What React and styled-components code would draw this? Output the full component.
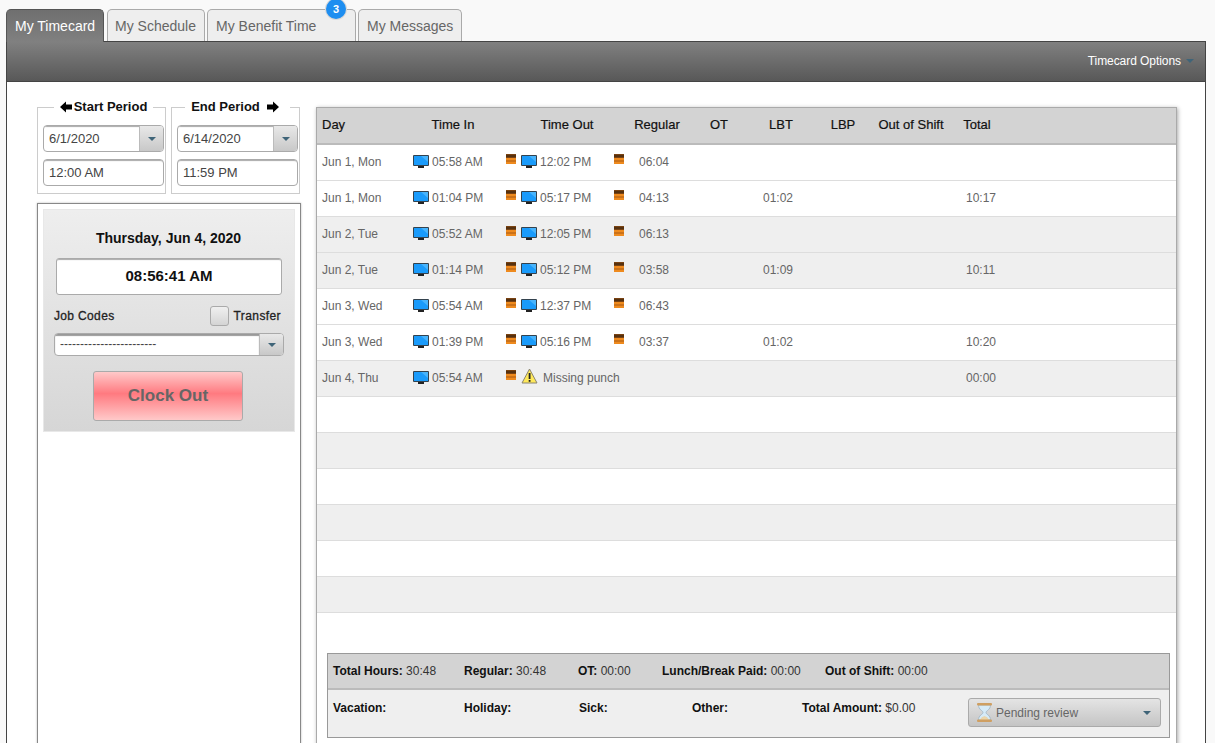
import React from 'react';
import styled, { createGlobalStyle } from 'styled-components';

const Global = createGlobalStyle`
  html, body {
    margin: 0;
    height: 743px;
    overflow: hidden;
    background: #f9f9f9;
    font-family: "Liberation Sans", Arial, sans-serif;
  }
`;

const Page = styled.div`
  padding: 9px 9px 0 6px;
`;

const Tabs = styled.div`
  display: flex;
  gap: 2px;
  height: 32px;
  position: relative;
  z-index: 1;
`;

const Tab = styled.div`
  position: relative;
  box-sizing: border-box;
  width: ${(p) => p.$width}px;
  margin-left: ${(p) => p.$gap || 0}px;
  height: ${(p) => (p.$active ? 33 : 32)}px;
  padding: 8px 0 0 ${(p) => p.$pad || 8}px;
  font-size: 14px;
  line-height: 16px;
  border: 1px solid ${(p) => (p.$active ? '#555' : '#aaa')};
  border-bottom: none;
  border-radius: 5px 5px 0 0;
  color: ${(p) => (p.$active ? '#fff' : '#666')};
  background: ${(p) => (p.$active ? 'linear-gradient(#6f6f6f, #808080)' : '#eee')};
`;

const Badge = styled.span`
  position: absolute;
  top: -11px;
  right: 9px;
  width: 20px;
  height: 20px;
  border-radius: 50%;
  background: #1e8ef0;
  box-shadow: 0 0 0 1px #d8d8d8;
  color: #fff;
  font-size: 11px;
  font-weight: bold;
  line-height: 20px;
  text-align: center;
`;

const Panel = styled.div`
  box-sizing: border-box;
  height: 720px;
  border: 1px solid #444;
  background: #fff;
`;

const Toolbar = styled.div`
  box-sizing: border-box;
  height: 40px;
  display: flex;
  align-items: center;
  justify-content: flex-end;
  gap: 5px;
  padding: 0 11px 2px 0;
  border-bottom: 1px solid #444;
  background: linear-gradient(#808080, #585858);
  color: #fff;
  font-size: 12px;
  letter-spacing: -0.06px;
`;

const Caret = styled.span`
  display: inline-block;
  width: 0;
  height: 0;
  border-left: 4px solid transparent;
  border-right: 4px solid transparent;
  border-top: 4px solid ${(p) => p.$color || '#3f6478'};
`;

const Content = styled.div`
  display: flex;
  gap: 15px;
  padding: 18px 0 0 30px;
`;

const LeftColumn = styled.div`
  width: 264px;
  display: flex;
  flex-direction: column;
  gap: 9px;
`;

const Periods = styled.div`
  display: flex;
  gap: 5px;
`;

const Period = styled.fieldset`
  box-sizing: border-box;
  width: 129px;
  height: 94px;
  margin: 0;
  padding: 11px 1px 0 5px;
  border: 1px solid #ccc;
  display: flex;
  flex-direction: column;
  gap: 7px;
`;

const Legend = styled.legend`
  display: flex;
  align-items: center;
  gap: 2px;
  margin: 0 auto;
  padding: 0 ${(p) => (p.$end ? 11 : 6)}px 0 6px;
  height: 14px;
  font-size: 13px;
  line-height: 14px;
  font-weight: bold;
  color: #111;
`;

const Arrow = styled.svg`
  width: 12px;
  height: 12px;
  margin: ${(p) => (p.$end ? '0 0 0 5px' : '0')};
  fill: #000;
`;

const Combo = styled.div`
  box-sizing: border-box;
  display: flex;
  height: 27px;
  width: ${(p) => p.$width || 121}px;
  border: 1px solid #aaa;
  border-radius: 4px;
  background: #fff;
  overflow: hidden;
`;

const ComboText = styled.div`
  flex: 1;
  padding-left: 5px;
  font-size: 13px;
  line-height: 25px;
  color: #444;
  box-shadow: inset 0 2px 1px -1px #aaa;
`;

const ComboButton = styled.div`
  width: 23px;
  display: flex;
  align-items: center;
  justify-content: center;
  border-left: 1px solid #bbb;
  background: linear-gradient(#e8e8e8, #c8c8c8);
`;

const TextBox = styled.div`
  box-sizing: border-box;
  width: 121px;
  height: 27px;
  padding-left: 5px;
  border: 1px solid #aaa;
  border-radius: 4px;
  box-shadow: inset 0 2px 1px -1px #aaa;
  font-size: 13px;
  line-height: 25px;
  color: #444;
`;

const ClockFrame = styled.div`
  box-sizing: border-box;
  height: 560px;
  padding: 5px;
  border: 1px solid #888;
  box-shadow: 0 0 2px #bbb;
`;

const Clock = styled.div`
  box-sizing: border-box;
  height: 223px;
  padding: 21px 11px 0 10px;
  border: 1px solid #e8e8e8;
  background: linear-gradient(#eeeeee, #d6d6d6);
  display: flex;
  flex-direction: column;
`;

const DateLine = styled.div`
  text-align: center;
  font-size: 14px;
  font-weight: bold;
  line-height: 14px;
  color: #111;
`;

const TimeBox = styled.div`
  box-sizing: border-box;
  margin: 13px 1px 0 2px;
  height: 37px;
  border: 1px solid #aaa;
  border-radius: 3px;
  background: #fff;
  box-shadow: inset 0 2px 1px -1px #aaa;
  text-align: center;
  font-size: 15px;
  font-weight: bold;
  line-height: 34px;
  color: #111;
`;

const JobRow = styled.div`
  display: flex;
  align-items: center;
  justify-content: space-between;
  margin-top: 11px;
  padding-right: 2px;
  height: 20px;
  font-size: 12px;
  color: #222;
  -webkit-text-stroke: 0.3px #222;
  letter-spacing: 0.35px;
`;

const Transfer = styled.label`
  display: flex;
  align-items: center;
  gap: 5px;
  letter-spacing: 0.4px;
`;

const Check = styled.span`
  box-sizing: border-box;
  width: 19px;
  height: 20px;
  border: 1px solid #aaa;
  border-radius: 3px;
  background: linear-gradient(#f0f0f0, #d4d4d4);
`;

const JobCombo = styled(Combo)`
  margin-top: 7px;
  height: 23px;
  width: 230px;
`;

const JobText = styled(ComboText)`
  line-height: 20px;
  box-shadow: inset 0 2px 1px 0 #999;
  font-size: 12px;
  letter-spacing: 0.02px;
`;

const ClockOut = styled.button`
  align-self: center;
  margin: 15px 2px 0 0;
  width: 150px;
  height: 50px;
  padding: 0 0 0 1px;
  border: 1px solid #aaa;
  border-radius: 3px;
  background: linear-gradient(#ffc9c9, #ff7a80 45%, #ffc9c9);
  color: #666;
  font-family: inherit;
  font-size: 17px;
  font-weight: bold;
`;

const Grid = styled.div`
  box-sizing: border-box;
  width: 861px;
  height: 700px;
  margin-top: 7px;
  border: 1px solid #aaa;
  box-shadow: 1px 1px 4px #aaa;
`;

const HeaderRow = styled.div`
  display: grid;
  grid-template-columns: 96px 80px 12px 124px 56px 68px 56px 68px 68px 64px;
  box-sizing: border-box;
  height: 37px;
  padding-bottom: 3px;
  align-items: center;
  background: #d3d3d3;
  border-bottom: 2px solid #bbb;
  font-size: 13px;
  color: #111;
  -webkit-text-stroke: 0.2px #111;
  text-align: center;
`;

const DayHead = styled.span`
  text-align: left;
  padding-left: 5px;
`;

const Row = styled.div`
  display: grid;
  grid-template-columns: 96px 93px 108px 149px 203px 1fr;
  box-sizing: border-box;
  height: 36px;
  padding-bottom: 2px;
  align-items: center;
  border-bottom: 1px solid #ddd;
  background: ${(p) => (p.$shaded ? '#efefef' : '#fff')};
  font-size: 12px;
  color: #666;
`;

const Cell = styled.div`
  display: flex;
  align-items: center;
  padding-left: ${(p) => p.$pad || 0}px;
  grid-column: span ${(p) => p.$span || 1};
  white-space: nowrap;
`;

const RegularValue = styled.span`
  margin-left: 10px;
`;

const Marker = styled.svg`
  width: 10px;
  height: 10px;
  margin: -6px 5px 0 0;
  flex: none;
`;

const Monitor = styled.svg`
  width: 16px;
  height: 13px;
  margin-right: 3px;
  flex: none;
`;

const Warn = styled.svg`
  width: 17px;
  height: 16px;
  margin: -4px 5px 0 0;
  flex: none;
`;

const Summary = styled.div`
  box-sizing: border-box;
  margin: 40px 6px 0 10px;
  border: 1px solid #999;
  height: 85px;
  font-size: 12px;
  color: #333;
`;

const SummaryTop = styled.div`
  display: flex;
  align-items: center;
  height: 36px;
  padding-left: 5px;
  background: #d3d3d3;
  border-bottom: 2px solid #bbb;
  box-sizing: border-box;
`;

const SummaryBottom = styled.div`
  display: flex;
  height: 47px;
  padding: 11px 0 0 5px;
  box-sizing: border-box;
  background: #efefef;
`;

const Stat = styled.div`
  width: ${(p) => p.$width}px;
  flex: none;
  white-space: nowrap;
`;

const Label = styled.b`
  color: #111;
`;

const Status = styled.div`
  box-sizing: border-box;
  width: 193px;
  height: 29px;
  margin-top: -3px;
  display: flex;
  align-items: center;
  padding: 0 9px 0 7px;
  border: 1px solid #aaa;
  border-radius: 3px;
  background: linear-gradient(#e4e4e4, #c4c4c4);
  color: #666;
`;

const StatusText = styled.span`
  flex: 1;
`;

const Glass = styled.svg`
  width: 17px;
  height: 21px;
  margin-right: 3px;
`;

const MonitorIcon = () => (
  <Monitor viewBox="0 0 16 13">
    <rect x="0" y="0" width="16" height="11" rx="1" fill="#33424e" />
    <rect x="1" y="1" width="14" height="9" fill="#1a9bfb" />
    <path d="M8 1h7v6z" fill="#48b4fc" />
    <rect x="5" y="11" width="6" height="2" fill="#222" />
  </Monitor>
);

const MarkerIcon = () => (
  <Marker viewBox="0 0 10 10">
    <rect width="10" height="10" fill="#ee8a1e" />
    <rect width="10" height="4" fill="#7a4312" />
    <rect y="1.500" width="10" height="1" fill="#33200c" />
    <rect y="6.500" width="10" height="1" fill="#a85a14" />
  </Marker>
);

const WarnIcon = () => (
  <Warn viewBox="0 0 17 16">
    <path d="M8.500 1 16 15H1z" fill="#ffe95a" stroke="#8a8470" strokeLinejoin="round" />
    <rect x="7.700" y="5" width="1.800" height="6" fill="#222" />
    <rect x="7.700" y="12" width="1.800" height="1.800" fill="#222" />
  </Warn>
);

const rows = [
  { day: 'Jun 1, Mon', timeIn: '05:58 AM', timeOut: '12:02 PM', regular: '06:04' },
  { day: 'Jun 1, Mon', timeIn: '01:04 PM', timeOut: '05:17 PM', regular: '04:13', lbt: '01:02', total: '10:17' },
  { day: 'Jun 2, Tue', timeIn: '05:52 AM', timeOut: '12:05 PM', regular: '06:13' },
  { day: 'Jun 2, Tue', timeIn: '01:14 PM', timeOut: '05:12 PM', regular: '03:58', lbt: '01:09', total: '10:11' },
  { day: 'Jun 3, Wed', timeIn: '05:54 AM', timeOut: '12:37 PM', regular: '06:43' },
  { day: 'Jun 3, Wed', timeIn: '01:39 PM', timeOut: '05:16 PM', regular: '03:37', lbt: '01:02', total: '10:20' },
  { day: 'Jun 4, Thu', timeIn: '05:54 AM', missing: true, total: '00:00' },
];

const shaded = [false, false, true, true, false, false, true, false, true, false, true, false, true];
const headers = ['Time In', '', 'Time Out', 'Regular', 'OT', 'LBT', 'LBP', 'Out of Shift', 'Total'];

const App = () => {
  return (
    <Page>
      <Global />
      <Tabs>
        <Tab $active $width={98}>My Timecard</Tab>
        <Tab $width={98} $gap={1} $pad={7}>My Schedule</Tab>
        <Tab $width={149}>My Benefit Time<Badge>3</Badge></Tab>
        <Tab $width={104}>My Messages</Tab>
      </Tabs>
      <Panel>
        <Toolbar>Timecard Options <Caret /></Toolbar>
        <Content>
          <LeftColumn>
            <Periods>
              <Period>
                <Legend>
                  <Arrow viewBox="0 0 12 12"><path d="M0 6 6 0.500V3.500H12V8.500H6V11.500z" /></Arrow>
                  Start Period
                </Legend>
                <Combo><ComboText>6/1/2020</ComboText><ComboButton><Caret /></ComboButton></Combo>
                <TextBox>12:00 AM</TextBox>
              </Period>
              <Period>
                <Legend $end>
                  End Period
                  <Arrow $end viewBox="0 0 12 12"><path d="M12 6 6 0.500V3.500H0V8.500H6V11.500z" /></Arrow>
                </Legend>
                <Combo><ComboText>6/14/2020</ComboText><ComboButton><Caret /></ComboButton></Combo>
                <TextBox>11:59 PM</TextBox>
              </Period>
            </Periods>
            <ClockFrame>
              <Clock>
                <DateLine>Thursday, Jun 4, 2020</DateLine>
                <TimeBox>08:56:41 AM</TimeBox>
                <JobRow>
                  <span>Job Codes</span>
                  <Transfer><Check />Transfer</Transfer>
                </JobRow>
                <JobCombo>
                  <JobText>------------------------</JobText>
                  <ComboButton><Caret /></ComboButton>
                </JobCombo>
                <ClockOut>Clock Out</ClockOut>
              </Clock>
            </ClockFrame>
          </LeftColumn>
          <Grid>
            <HeaderRow>
              <DayHead>Day</DayHead>
              {headers.map((h, i) => <span key={i}>{h}</span>)}
            </HeaderRow>
            {shaded.map((isShaded, i) => {
              const r = rows[i];
              return (
                <Row key={i} $shaded={isShaded}>
                  {r && (
                    <>
                      <Cell $pad={5}>{r.day}</Cell>
                      <Cell><MonitorIcon />{r.timeIn}</Cell>
                      {r.missing ? (
                        <Cell $span={2}><MarkerIcon /><WarnIcon />Missing punch</Cell>
                      ) : (
                        <>
                          <Cell><MarkerIcon /><MonitorIcon />{r.timeOut}</Cell>
                          <Cell><MarkerIcon /><RegularValue>{r.regular}</RegularValue></Cell>
                        </>
                      )}
                      <Cell>{r.lbt}</Cell>
                      <Cell>{r.total}</Cell>
                    </>
                  )}
                </Row>
              );
            })}
            <Summary>
              <SummaryTop>
                <Stat $width={131}><Label>Total Hours:</Label> 30:48</Stat>
                <Stat $width={114}><Label>Regular:</Label> 30:48</Stat>
                <Stat $width={84}><Label>OT:</Label> 00:00</Stat>
                <Stat $width={163}><Label>Lunch/Break Paid:</Label> 00:00</Stat>
                <Stat $width={120}><Label>Out of Shift:</Label> 00:00</Stat>
              </SummaryTop>
              <SummaryBottom>
                <Stat $width={131}><Label>Vacation:</Label></Stat>
                <Stat $width={115}><Label>Holiday:</Label></Stat>
                <Stat $width={113}><Label>Sick:</Label></Stat>
                <Stat $width={110}><Label>Other:</Label></Stat>
                <Stat $width={166}><Label>Total Amount:</Label> $0.00</Stat>
                <Status>
                  <Glass viewBox="0 0 17 21">
                    <path d="M2.500 3c0 5 4.500 5.500 4.500 7.500S2.500 13 2.500 18h12c0-5-4.500-5.500-4.500-7.500S14.500 8 14.500 3z" fill="#d6ebf8" stroke="#9db4c4" strokeWidth="0.8" />
                    <path d="M4 18c1-3 3.500-3.500 4.500-4 1 .5 3.500 1 4.500 4z" fill="#ead5ab" />
                    <rect x="1" y="1" width="15" height="2.500" rx="1" fill="#cf9f62" />
                    <rect x="1" y="17.500" width="15" height="2.500" rx="1" fill="#cf9f62" />
                  </Glass>
                  <StatusText>Pending review</StatusText>
                  <Caret />
                </Status>
              </SummaryBottom>
            </Summary>
          </Grid>
        </Content>
      </Panel>
    </Page>
  );
};

export default App;
